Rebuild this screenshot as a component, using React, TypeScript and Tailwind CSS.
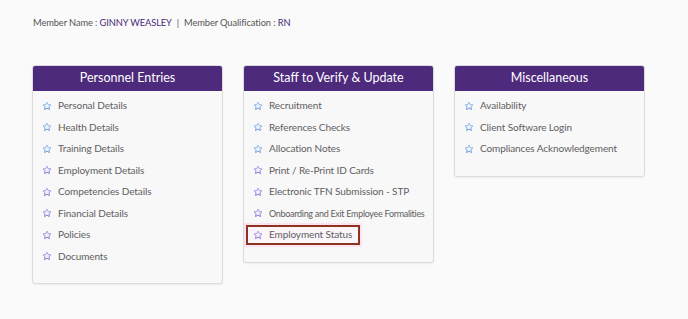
import { useId } from 'react'

type Section = { title: string; items: string[] }

const sections: Section[] = [
  {
    title: 'Personnel Entries',
    items: [
      'Personal Details',
      'Health Details',
      'Training Details',
      'Employment Details',
      'Competencies Details',
      'Financial Details',
      'Policies',
      'Documents',
    ],
  },
  {
    title: 'Staff to Verify & Update',
    items: [
      'Recruitment',
      'References Checks',
      'Allocation Notes',
      'Print / Re-Print ID Cards',
      'Electronic TFN Submission - STP',
      'Onboarding and Exit Employee Formalities',
      'Employment Status',
    ],
  },
  {
    title: 'Miscellaneous',
    items: ['Availability', 'Client Software Login', 'Compliances Acknowledgement'],
  },
]

/** Estrela contornada, azul nas primeiras linhas e lilás nas de baixo */
function Star({ purple }: { purple: boolean }) {
  const id = useId()
  const top = purple ? '#b9a8ea' : '#9cc6ee'
  const bottom = purple ? '#8b78d6' : '#6d9fdc'
  return (
    <svg width="10" height="10" viewBox="0 0 24 24" className="shrink-0">
      <defs>
        <linearGradient id={id} x1="0" y1="0" x2="0" y2="1">
          <stop offset="0" stopColor={top} />
          <stop offset="1" stopColor={bottom} />
        </linearGradient>
      </defs>
      <path
        d="M12 2.5l2.9 6.1 6.6.8-4.9 4.6 1.3 6.6L12 17.3l-5.9 3.3 1.3-6.6-4.9-4.6 6.6-.8z"
        fill="#eef2fb"
        stroke={`url(#${id})`}
        strokeWidth="2.4"
        strokeLinejoin="round"
      />
    </svg>
  )
}

export default function App() {
  return (
    <div
      className="w-[688px] h-[319px] bg-[#fafafa] overflow-hidden"
      style={{ fontFamily: 'Lato, "Open Sans", sans-serif' }}
    >
      <div className="pt-[17px] pl-[33px] text-[9.3px] tracking-[-0.1px] text-[#555] leading-[12px]">
        Member Name : <span className="text-[#4a2a78]">GINNY WEASLEY</span>
        <span className="mx-[5px]">|</span>
        Member Qualification : <span className="text-[#4a2a78]">RN</span>
      </div>

      <div className="flex items-start gap-5 pl-[32px] mt-[36px]">
        {sections.map((s) => (
          <div
            key={s.title}
            className="w-[191px] bg-[#f8f8f9] border border-[#dcdcdc] rounded-[3px] shadow-[0_1px_2px_rgba(0,0,0,0.06)] overflow-hidden"
          >
            <div className="h-[25px] bg-[#4e2a7c] text-white text-[12.5px] flex items-center justify-center">
              {s.title}
            </div>
            <ul className="pt-[4px] pb-[16px] px-[2px]">
              {s.items.map((item, i) => {
                const hl = item === 'Employment Status'
                const long = item.length > 34
                return (
                  <li key={item} className="h-[21.5px] flex items-center">
                    <div
                      className={
                        hl
                          ? 'flex items-center gap-[6px] pl-[5px] pr-[6px] h-[20px] border-2 border-[#8e3320] bg-[#fbf5fa] shadow-[0_0_0_2px_#fbe3f3]'
                          : 'flex items-center gap-[6px] pl-[7px]'
                      }
                    >
                      <Star purple={i >= 3} />
                      <span
                        className={
                          long
                            ? 'text-[9px] tracking-[-0.3px] text-[#606060] whitespace-nowrap'
                            : 'text-[10px] tracking-[-0.1px] text-[#606060] whitespace-nowrap'
                        }
                      >
                        {item}
                      </span>
                    </div>
                  </li>
                )
              })}
            </ul>
          </div>
        ))}
      </div>
    </div>
  )
}
